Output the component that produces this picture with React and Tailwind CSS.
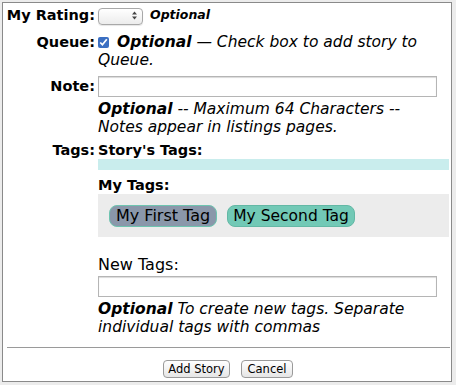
import { useState } from 'react';

function App() {
  const [queued, setQueued] = useState(true);
  const [rating, setRating] = useState('');

  return (
    <div className="w-[456px] h-[385px] bg-[#ececec] pt-[2px] pl-[2px] font-['DejaVu_Sans',sans-serif] text-[14.5px] leading-[18px] text-black">
      <div className="w-[450px] h-[380px] bg-white border border-[#8a8a8a] pt-[3px]">
        <div className="grid grid-cols-[92px_351px] gap-x-[3px]">
          <div className="text-right font-bold">My Rating:</div>
          <div className="flex items-center gap-[7px] h-[18px]">
            <div className="relative w-[45px] h-[17px]">
              <select
                value={rating}
                onChange={(e) => setRating(e.target.value)}
                className="appearance-none w-full h-full border border-[#a8a8a8] rounded-[4px] bg-gradient-to-b from-white to-[#ececec] text-[11px] shadow-[0_1px_1px_rgba(0,0,0,0.1)]"
              >
                <option value=""></option>
                <option value="1">1</option>
                <option value="2">2</option>
                <option value="3">3</option>
              </select>
              <svg className="absolute right-[6px] top-[4px] pointer-events-none" width="5" height="9" viewBox="0 0 5 9">
                <path d="M0 3.5L2.5 0.5L5 3.5Z" fill="#444" />
                <path d="M0 5.5L2.5 8.5L5 5.5Z" fill="#444" />
              </svg>
            </div>
            <span className="italic font-bold text-[12.5px]">Optional</span>
          </div>

          <div className="text-right font-bold mt-[9px]">Queue:</div>
          <div className="mt-[9px] italic text-[15.5px]">
            <input
              type="checkbox"
              checked={queued}
              onChange={(e) => setQueued(e.target.checked)}
              className="w-[11px] h-[11px] mr-[8px] accent-[#3b6fc2] align-[-1px]"
            />
            <b>Optional</b> — Check box to add story to Queue.
          </div>

          <div className="text-right font-bold mt-[7px] pt-[1px]">Note:</div>
          <div className="mt-[7px]">
            <input type="text" className="block w-[339px] h-[21px] border border-[#b5b5b5] shadow-[inset_0_1px_1px_rgba(0,0,0,0.15)] bg-white" />
            <div className="italic mt-[3px] text-[15.5px]">
              <b>Optional</b> -- Maximum 64 Characters -- Notes appear in listings pages.
            </div>
          </div>

          <div className="text-right font-bold mt-[5px]">Tags:</div>
          <div className="mt-[5px]">
            <div className="font-bold">Story's Tags:</div>
            <div className="h-[11px] bg-[#c9eded]"></div>
            <div className="font-bold mt-[6px]">My Tags:</div>
            <div className="bg-[#ececec] h-[43px] flex items-center gap-[10px] pl-[11px]">
              <span className="h-[22px] px-[6px] flex items-center rounded-[8px] bg-[#8a97aa] border border-[#6ec4b0] text-[16px]">My First Tag</span>
              <span className="h-[22px] px-[5px] flex items-center rounded-[8px] bg-[#72c9b6] border border-[#63b8a5] text-[15.5px]">My Second Tag</span>
            </div>
            <div className="mt-[19px] text-[16px]">New Tags:</div>
            <input type="text" className="block mt-[2px] w-[339px] h-[21px] border border-[#b5b5b5] shadow-[inset_0_1px_1px_rgba(0,0,0,0.15)] bg-white" />
            <div className="italic mt-[3px] text-[15.5px]">
              <b>Optional</b> To create new tags. Separate individual tags with commas
            </div>
          </div>
        </div>

        <div className="ml-[4px] mr-[1px] mt-[11px] border-t border-[#9a9a9a]"></div>

        <div className="flex gap-[11px] mt-[12px] text-[11.5px] pl-[160px]">
          <button className="w-[67px] h-[18px] border border-[#9a9a9a] rounded-[4px] bg-gradient-to-b from-white to-[#e6e6e6] leading-[16px]">Add Story</button>
          <button className="w-[52px] h-[18px] border border-[#9a9a9a] rounded-[4px] bg-gradient-to-b from-white to-[#e6e6e6] leading-[16px]">Cancel</button>
        </div>
      </div>
    </div>
  );
}

export default App;
